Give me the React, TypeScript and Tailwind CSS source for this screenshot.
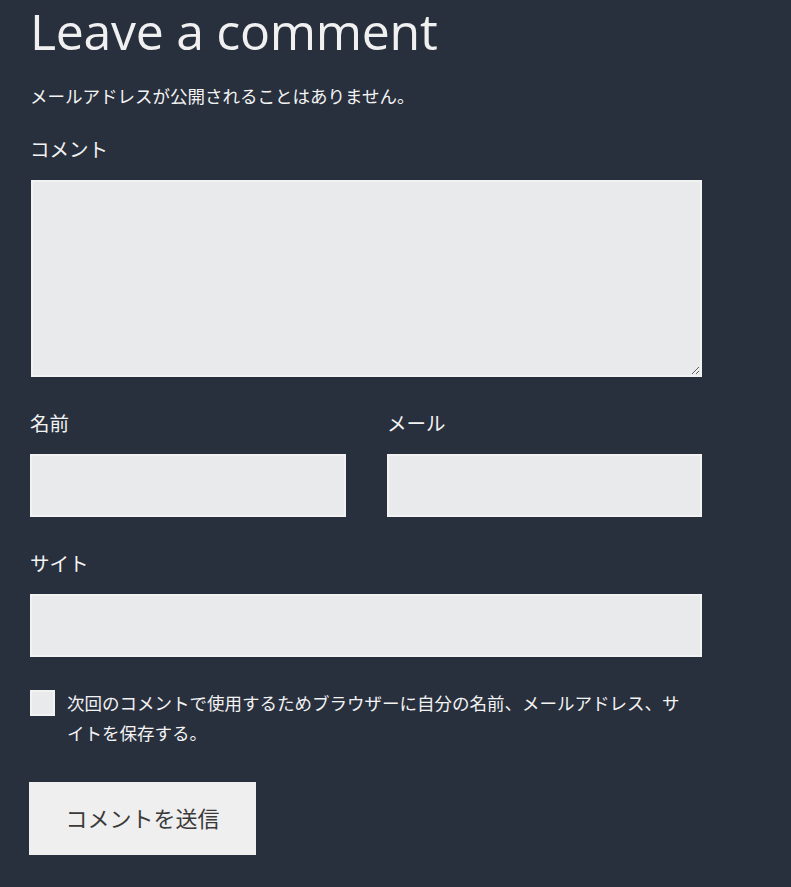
import React from "react";

const jp = "font-['Open_Sans','Noto_Sans_CJK_JP',sans-serif]";

function Field({ label, className = "" }: { label: string; className?: string }) {
  return (
    <div className={`flex flex-col ${className}`}>
      <label className="h-7 text-[19.5px] leading-7 text-[#f3f3f3]">{label}</label>
      <input
        type="text"
        className="mt-4 h-[63px] w-full border-2 border-[#f2f2f2] bg-[#e9eaeb] outline-none"
      />
    </div>
  );
}

export default function App() {
  return (
    <div className={`min-h-[887px] w-[791px] bg-[#282f3d] ${jp}`}>
      <div className="flex w-[702px] flex-col pl-[30px]">
        <h2 className="pt-[2px] font-['Open_Sans',sans-serif] text-[50px] font-normal leading-[58px] tracking-[-0.3px] text-[#f0f0f0]">
          Leave a comment
        </h2>
        <p className="mt-6 h-6 text-[17.5px] leading-6 text-[#f3f3f3]">
          メールアドレスが公開されることはありません。
        </p>

        <label className="mt-7 h-7 text-[19.5px] leading-7 text-[#f3f3f3]">コメント</label>
        <textarea className="ml-px mt-4 h-[197px] w-[671px] border-2 border-[#f2f2f2] bg-[#e9eaeb] outline-none" />

        <div className="ml-px mt-[33px] grid w-[671px] grid-cols-2 gap-[41px]">
          <Field label="名前" className="-ml-px" />
          <Field label="メール" />
        </div>

        <div className="ml-px mt-[33px] w-[671px]">
          <Field label="サイト" className="-ml-px" />
        </div>

        <div className="mt-[31px] flex items-start gap-3">
          <span className="mt-[2px] h-[26px] w-[25px] shrink-0 border-2 border-[#f2f2f2] bg-[#e9eaeb]" />
          <span className="w-[622px] text-[17.5px] leading-[30px] text-[#f3f3f3]">
            次回のコメントで使用するためブラウザーに自分の名前、メールアドレス、サイトを保存する。
          </span>
        </div>

        <button className="-ml-px mt-[34px] flex h-[73px] w-[227px] items-center justify-center bg-[#efefef] text-[22px] text-[#3a3a3a]">
          コメントを送信
        </button>
      </div>
    </div>
  );
}
